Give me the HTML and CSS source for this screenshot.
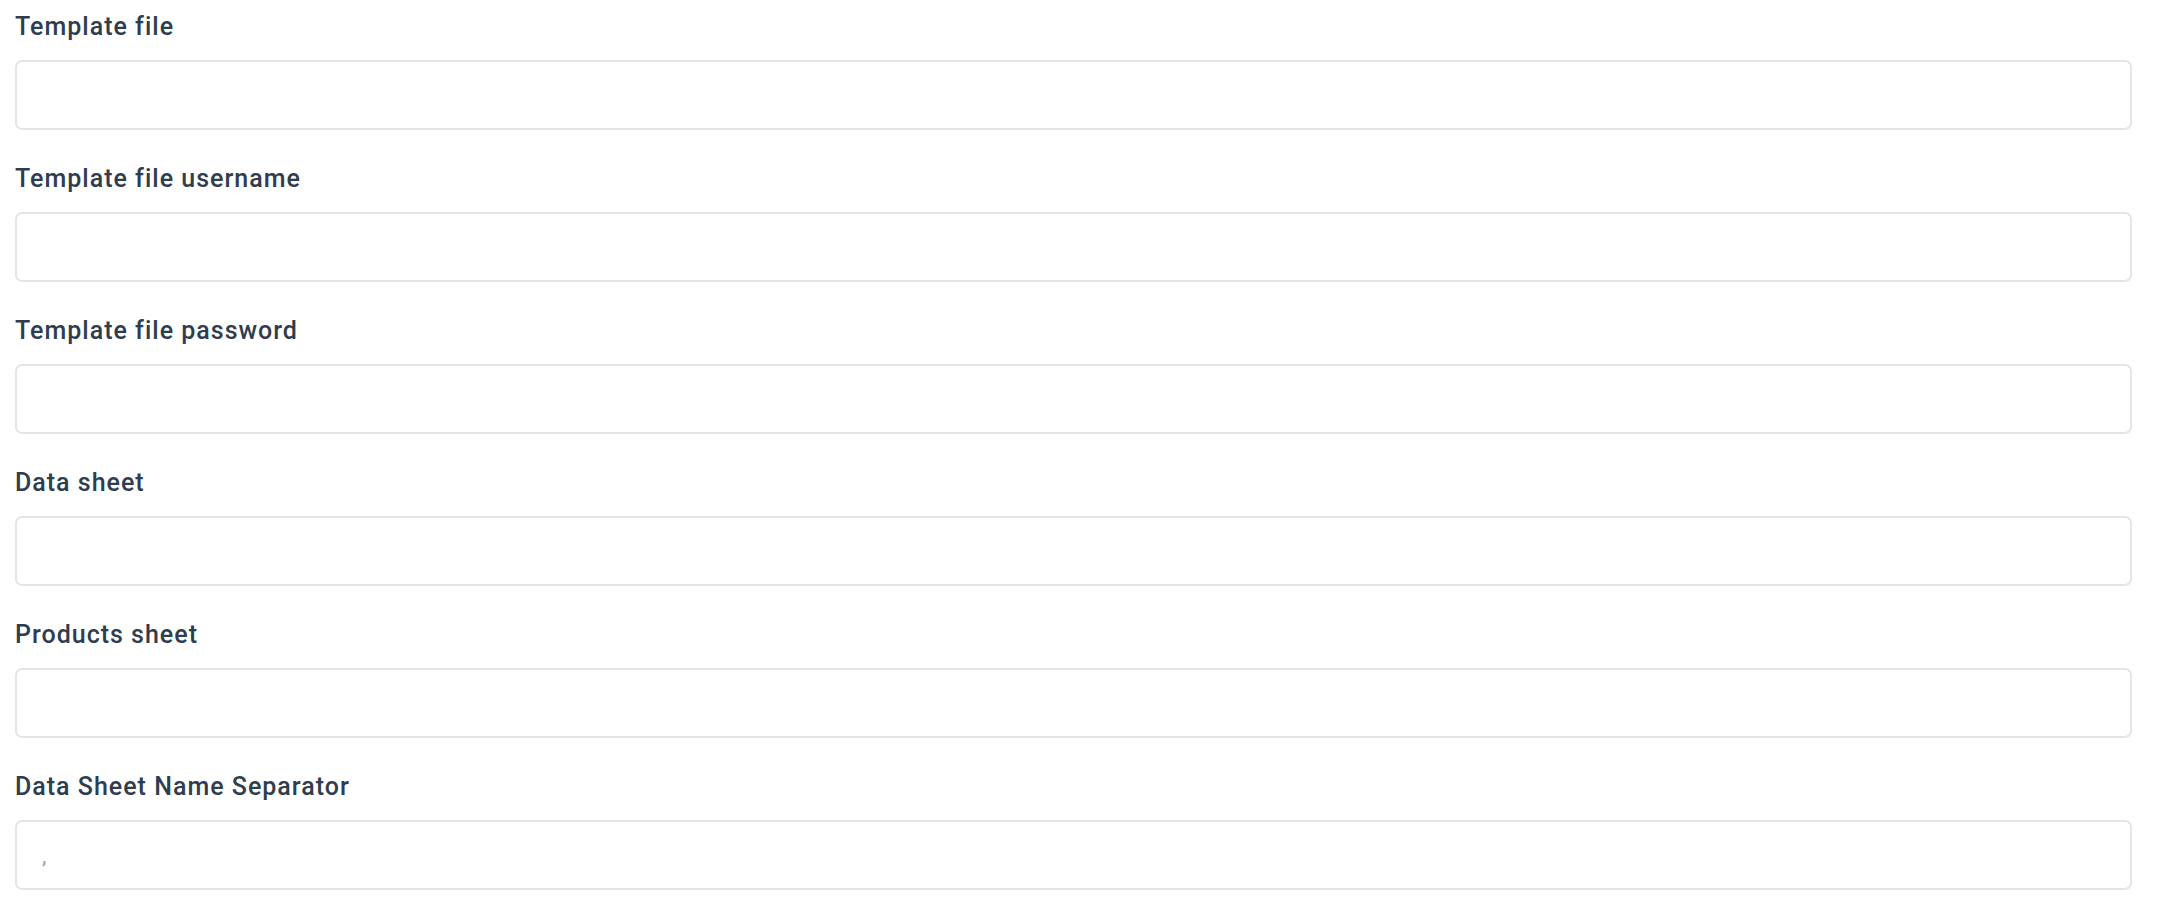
FILE: index.html
```html
<!DOCTYPE html>
<html lang="en">
<head>
  <meta charset="UTF-8" />
  <meta name="viewport" content="width=device-width, initial-scale=1.0" />
  <title>Template settings</title>
  <link rel="stylesheet" href="styles.css">
</head>
<body>
  <form class="settings">
    <div class="field">
      <label for="templateFile">Template file</label>
      <input type="text" id="templateFile" />
    </div>
    <div class="field">
      <label for="templateUser">Template file username</label>
      <input type="text" id="templateUser" />
    </div>
    <div class="field">
      <label for="templatePass">Template file password</label>
      <input type="password" id="templatePass" />
    </div>
    <div class="field">
      <label for="dataSheet">Data sheet</label>
      <input type="text" id="dataSheet" />
    </div>
    <div class="field">
      <label for="productsSheet">Products sheet</label>
      <input type="text" id="productsSheet" />
    </div>
    <div class="field">
      <label for="separator">Data Sheet Name Separator</label>
      <input type="text" id="separator" placeholder="," />
    </div>
  </form>
</body>
</html>
```

FILE: styles.css
```css
body {
  margin: 0;
  background: #fff;
  font-family: Roboto, 'Noto Sans', sans-serif;
}

.settings {
  display: flex;
  flex-direction: column;
  gap: 31px;
  padding: 9px 34px 0 15px;
}

.field {
  display: flex;
  flex-direction: column;
  gap: 15px;
}

.field label {
  font-size: 25px;
  font-weight: 500;
  line-height: 36px;
  letter-spacing: 1px;
  color: #2f3d4f;
}

.field input {
  box-sizing: border-box;
  height: 70px;
  width: 100%;
  border: 2px solid #e2e6eb;
  border-radius: 7px;
  padding: 0 25px;
  font-family: inherit;
  font-size: 22px;
  color: #2f3d4f;
  outline: none;
}

.field input::placeholder {
  color: #9aa1aa;
}
```
